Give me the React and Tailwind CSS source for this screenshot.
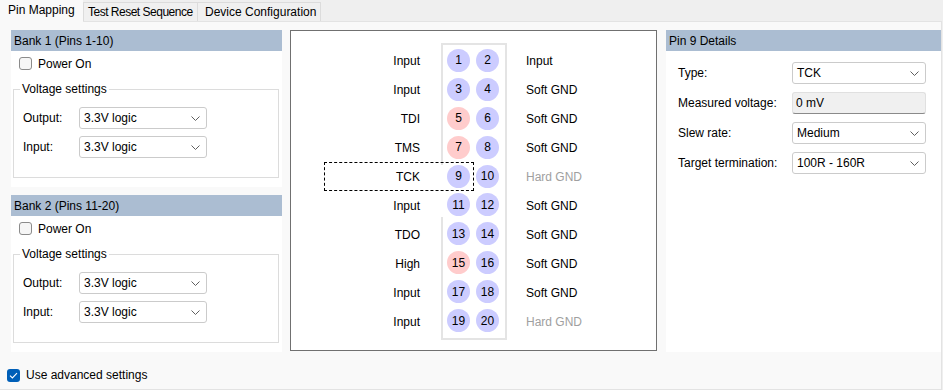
import React from 'react';

const font = { fontFamily: '"Liberation Sans", Arial, sans-serif' };

const leftLabels = ['Input', 'Input', 'TDI', 'TMS', 'TCK', 'Input', 'TDO', 'High', 'Input', 'Input'];
const rightLabels = ['Input', 'Soft GND', 'Soft GND', 'Soft GND', 'Hard GND', 'Soft GND', 'Soft GND', 'Soft GND', 'Soft GND', 'Hard GND'];
const redPins = [5, 7, 15];

function Chevron() {
  return (
    <svg width="9" height="5" viewBox="0 0 9 5" className="shrink-0">
      <path d="M0.5 0.5 L4.5 4.5 L8.5 0.5" fill="none" stroke="#5f5f5f" strokeWidth="1" />
    </svg>
  );
}

function Combo({ value, className }) {
  return (
    <div className={`flex h-[22px] items-center justify-between rounded-[3px] border border-[#cbcbcb] bg-white pl-[4px] pr-[6px] ${className}`}>
      <span>{value}</span>
      <Chevron />
    </div>
  );
}

function CheckBox({ checked }) {
  if (checked) {
    return (
      <div className="flex h-[13px] w-[13px] items-center justify-center rounded-[3px] bg-[#005fb8]">
        <svg width="9" height="7" viewBox="0 0 9 7">
          <path d="M1 3.6 L3.4 6 L8 1.2" fill="none" stroke="white" strokeWidth="1.1" />
        </svg>
      </div>
    );
  }
  return <div className="h-[13px] w-[13px] rounded-[3px] border border-[#8b8b8b] bg-[#f6f6f6]" />;
}

function Bank({ title }) {
  return (
    <div className="flex flex-col">
      <div className="flex h-[21px] items-center bg-[#abbdd2] pl-[3px]">{title}</div>
      <div className="flex h-[136px] flex-col bg-white pt-[6px]">
        <div className="flex h-[13px] items-center gap-[6px] pl-[8px]">
          <CheckBox />
          <span>Power On</span>
        </div>
        <fieldset className="ml-[2px] mt-[11px] w-[266px] border border-[#dcdcdc] pb-[19px] pt-[10px]">
          <legend className="ml-[6px] px-[2px] leading-[16px]">Voltage settings</legend>
          <div className="flex flex-col gap-[7px] pl-[9px]">
            <div className="flex items-center">
              <span className="w-[56px]">Output:</span>
              <Combo value="3.3V logic" className="w-[128px]" />
            </div>
            <div className="flex items-center">
              <span className="w-[56px]">Input:</span>
              <Combo value="3.3V logic" className="w-[128px]" />
            </div>
          </div>
        </fieldset>
      </div>
    </div>
  );
}

function PinMap() {
  return (
    <div className="relative flex h-[321px] w-[367px] border border-[#707070] bg-white pt-[12px]">
      <div className="mt-[3px] flex w-[129px] flex-col">
        {leftLabels.map((l, i) => (
          <div key={i} className="flex h-[29px] items-center justify-end">{l}</div>
        ))}
      </div>
      <div className="ml-[21px] flex h-[297px] w-[66px] flex-col border-2 border-[#e4e4e4] pb-[3px] pl-[4px] pt-[1px]">
        {leftLabels.map((_, i) => {
          const a = i * 2 + 1;
          const b = a + 1;
          return (
            <div key={i} className="flex h-[29px] items-center gap-[6px]">
              {[a, b].map((n) => (
                <div
                  key={n}
                  className={`flex h-[23px] w-[23px] items-center justify-center rounded-full ${redPins.includes(n) ? 'bg-[#ffcccc]' : 'bg-[#ccccff]'}`}
                >
                  {n}
                </div>
              ))}
            </div>
          );
        })}
      </div>
      <div className="ml-[19px] mt-[3px] flex flex-col">
        {rightLabels.map((l, i) => (
          <div key={i} className={`flex h-[29px] items-center ${l === 'Hard GND' ? 'text-[#a0a0a0]' : ''}`}>{l}</div>
        ))}
      </div>
      <div className="absolute left-[150px] top-[134px] h-[52px] w-[2px] bg-white" />
      <div className="absolute left-[33px] top-[131px] h-[29px] w-[150px] border border-dashed border-black" />
    </div>
  );
}

function Details() {
  return (
    <div className="flex h-[322px] w-[275px] flex-col">
      <div className="flex h-[21px] items-center bg-[#abbdd2] pl-[3px]">Pin 9 Details</div>
      <div className="flex-1 bg-white pl-[12px] pt-[11px]">
        <div className="grid grid-cols-[114px_134px] items-center gap-y-[8px]">
          <span>Type:</span>
          <Combo value="TCK" className="w-[134px]" />
          <span>Measured voltage:</span>
          <div className="flex h-[22px] w-[134px] items-center rounded-[3px] border border-[#e0e0e0] border-b-[#8a8a8a] bg-[#f0f0f0] pl-[3px]">
            0 mV
          </div>
          <span>Slew rate:</span>
          <Combo value="Medium" className="w-[134px]" />
          <span>Target termination:</span>
          <Combo value="100R - 160R" className="w-[134px]" />
        </div>
      </div>
    </div>
  );
}

export default function App() {
  return (
    <div className="flex h-[390px] w-[943px] flex-col bg-[#efefef] text-[12px] leading-[16px] text-black" style={font}>
      <div className="flex h-[21px] items-end">
        <div className="relative z-10 -mb-[1px] flex h-[22px] w-[83px] items-center bg-[#f9f9f9] pb-[2px] pl-[8px]">
          Pin Mapping
        </div>
        <div className="flex h-[19px] w-[115px] items-center border border-b-0 border-[#dcdcdc] bg-[#f0f0f0] pl-[4px] tracking-[-0.5px]">
          Test Reset Sequence
        </div>
        <div className="flex h-[19px] w-[123px] items-center border border-b-0 border-l-0 border-[#dcdcdc] bg-[#f0f0f0] pl-[7px]">
          Device Configuration
        </div>
      </div>
      <div className="flex h-[369px] w-[942px] flex-col border-b border-r border-t border-[#e3e3e3] bg-[#f9f9f9] pt-[8px]">
        <div className="flex pl-[11px]">
          <div className="flex w-[271px] flex-col gap-[8px]">
            <Bank title="Bank 1 (Pins 1-10)" />
            <Bank title="Bank 2 (Pins 11-20)" />
          </div>
          <div className="ml-[8px]">
            <PinMap />
          </div>
          <div className="ml-[9px]">
            <Details />
          </div>
        </div>
        <div className="mt-[15px] flex items-center gap-[6px] pl-[7px]">
          <CheckBox checked />
          <span>Use advanced settings</span>
        </div>
      </div>
    </div>
  );
}
